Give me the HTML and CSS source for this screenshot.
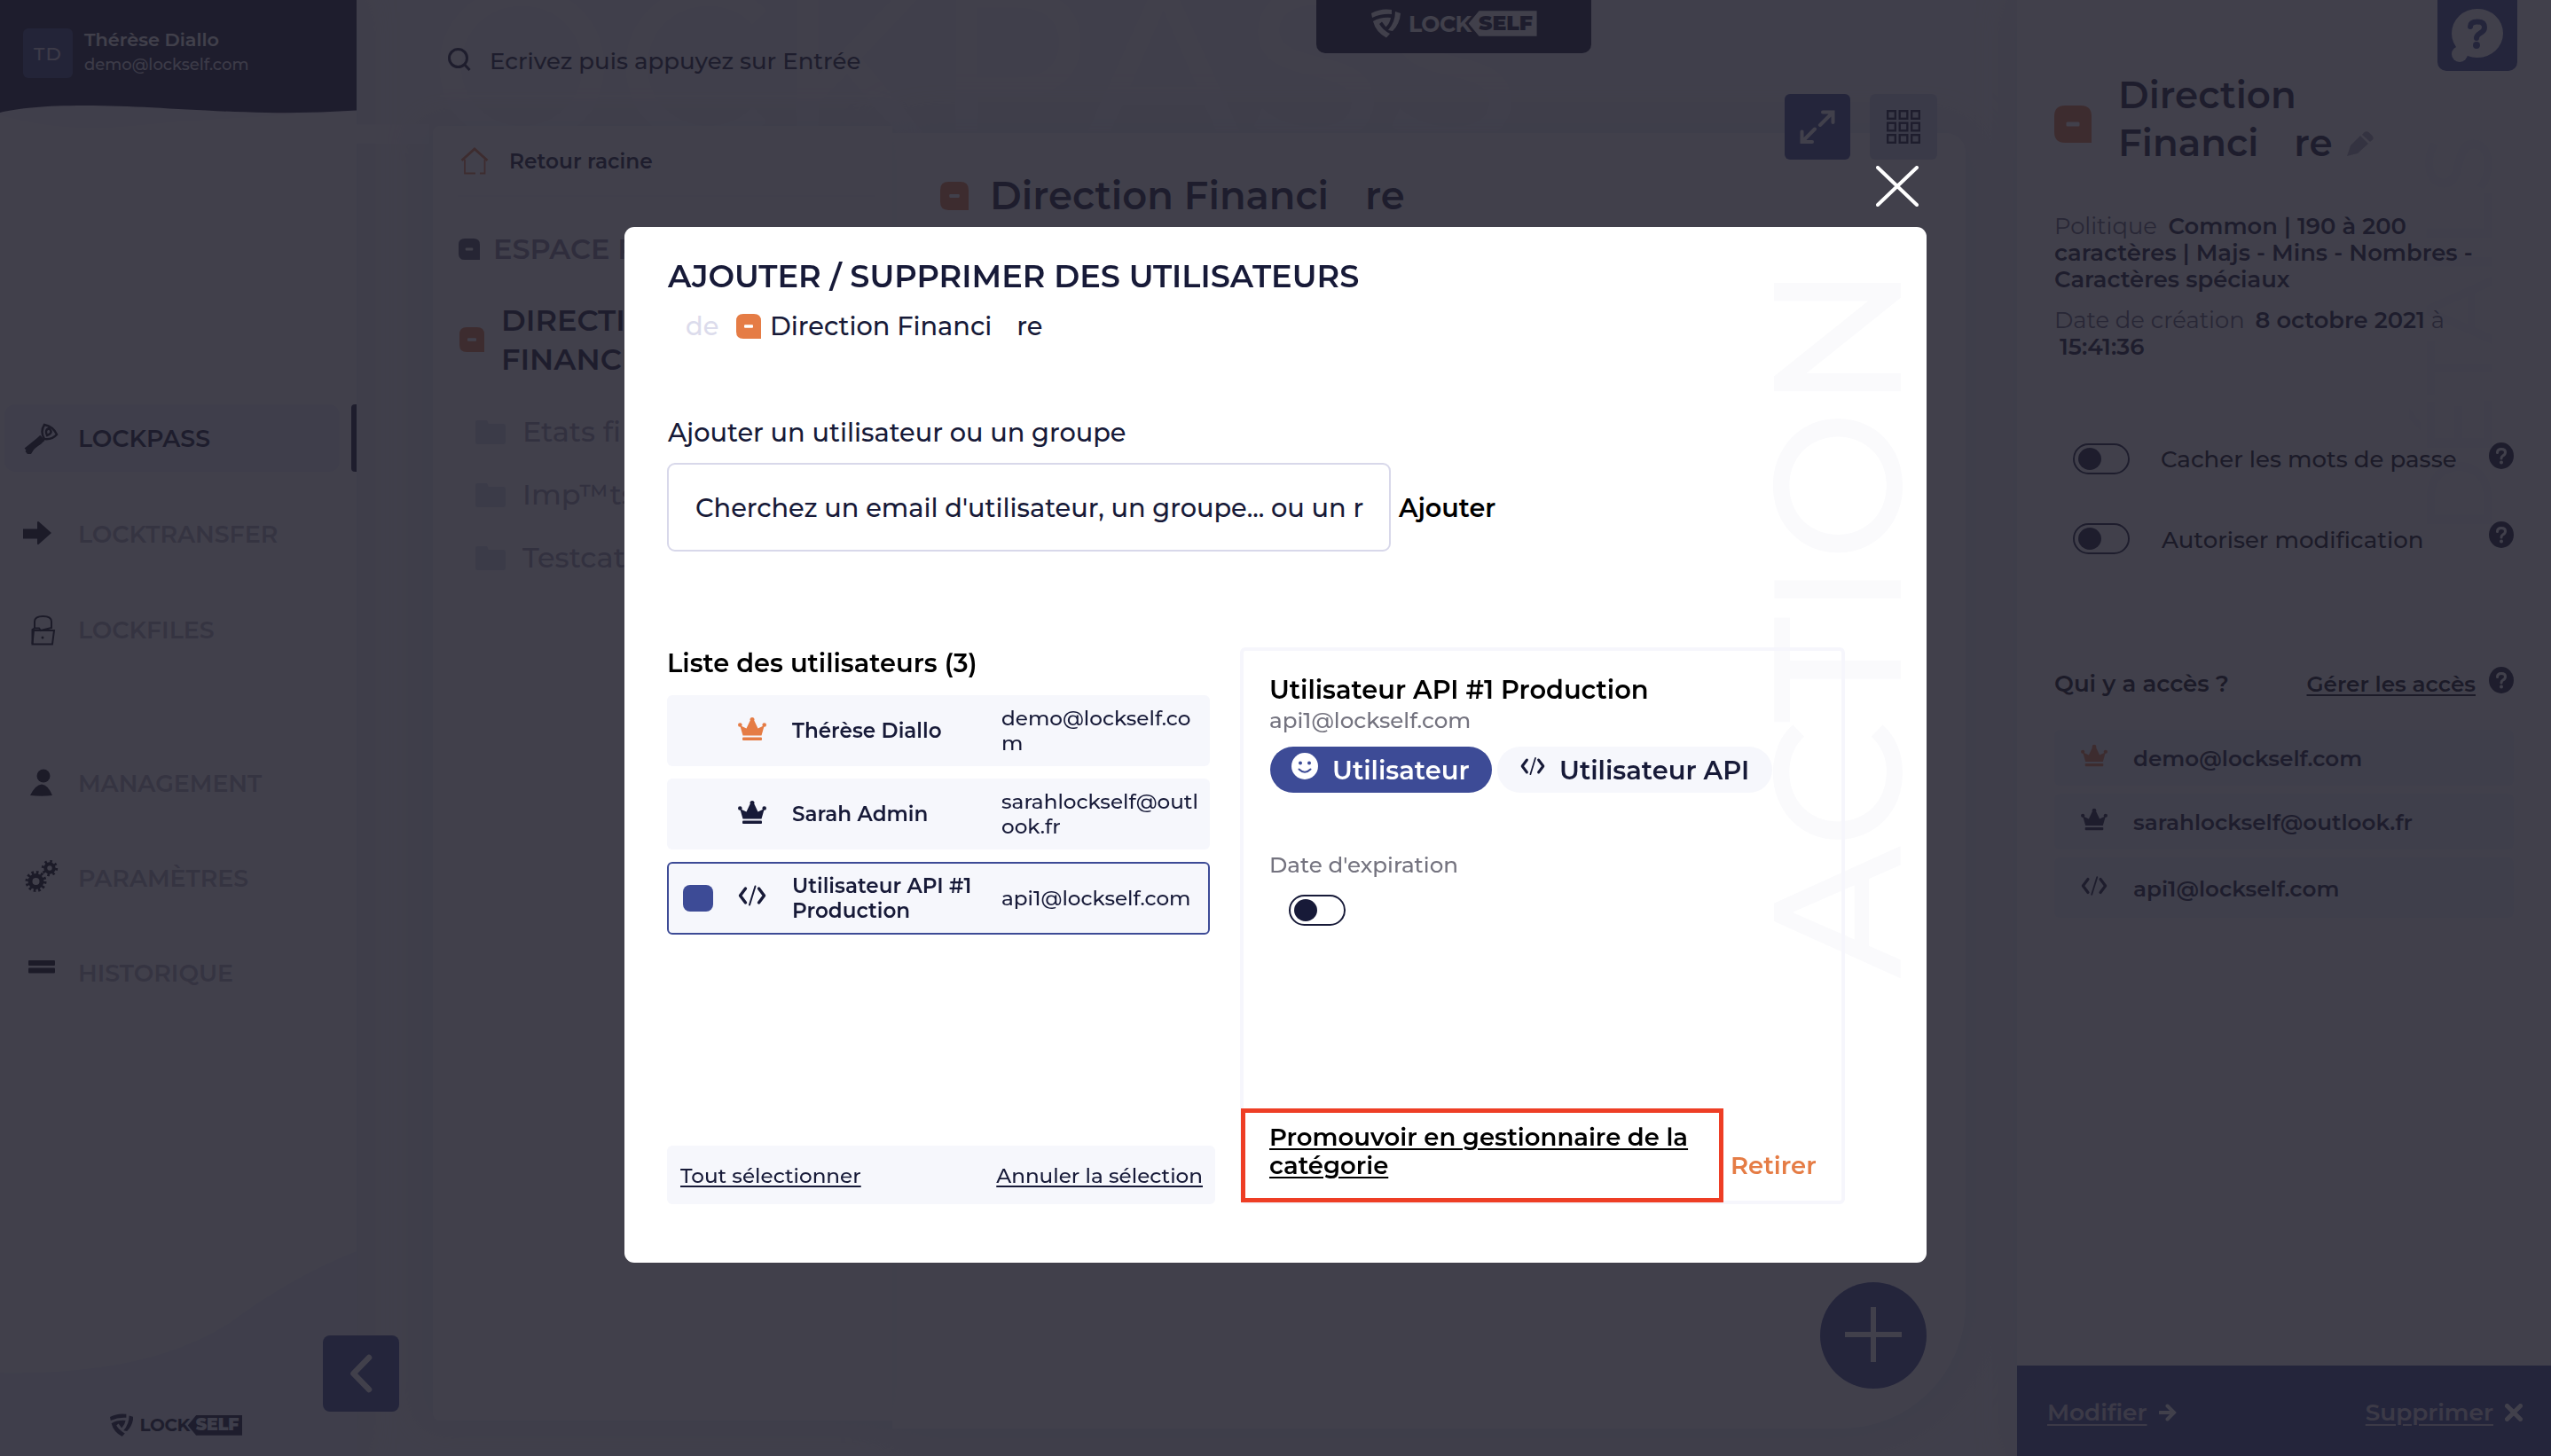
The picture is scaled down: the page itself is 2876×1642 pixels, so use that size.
FILE: index.html
```html
<!DOCTYPE html>
<html lang="fr">
<head>
	<meta charset="UTF-8">
	<meta name="viewport" content="width=device-width, initial-scale=1">
	<title>LockPass</title>
	<link rel="stylesheet" href="styles.css">
</head>
<body>
	<svg class="sprite" xmlns="http://www.w3.org/2000/svg">
		<symbol id="crown" viewBox="0 0 32 26">
			<path d="M5.500 20.500L2.200 9L9.500 12.500L13.500 4H18.500L22.500 12.500L29.800 9L26.500 20.500Z"/>
			<circle cx="2.300" cy="8.500" r="2.300"/><circle cx="16" cy="2.500" r="2.500"/><circle cx="29.700" cy="8.500" r="2.300"/>
			<rect x="5" y="22.500" width="22" height="3.500" rx="1"/>
		</symbol>
		<symbol id="code" viewBox="0 0 32 24">
			<g fill="none" stroke="currentColor" stroke-linecap="round" stroke-linejoin="round">
				<path d="M8.500 4L2.500 12L8.500 20M23.500 4L29.500 12L23.500 20" stroke-width="3.400"/>
				<path d="M19.500 1.500L13 22.500" stroke-width="2"/>
			</g>
		</symbol>
		<symbol id="category" viewBox="0 0 28 28">
			<path d="M8 0H20Q28 0 28 8V28H8Q0 28 0 20V8Q0 0 8 0Z"/>
			<rect x="9" y="12.300" width="10" height="3.400" rx="1" fill="#fff"/>
		</symbol>
		<symbol id="shield" viewBox="0 0 33 33">
			<path d="M0 5Q11 -1 23 1V6Q12 5 1 10Z"/>
			<path d="M27 3L33 5Q32 17 24 25L19 24Q27 15 27 3Z"/>
			<path d="M2 14Q11 9 22 10Q21 16 16.500 20.500L12 14.500L9 17Q13 24 21 28L17 32.500Q5 26 2 14Z"/>
		</symbol>
		<symbol id="folder" viewBox="0 0 34 27">
			<path d="M0 2Q0 0 2 0H13L15 4H32Q34 4 34 6V25Q34 27 32 27H2Q0 27 0 25Z"/>
		</symbol>
		<symbol id="help" viewBox="0 0 28 30">
			<ellipse cx="14" cy="15" rx="14" ry="15"/>
			<path d="M9.500 11.500Q9.500 7.500 14 7.500Q18.500 7.500 18.500 11Q18.500 13.500 16 14.800Q14 16 14 18" fill="none" stroke="#fff" stroke-width="3" stroke-linecap="round"/>
			<circle cx="14" cy="22.500" r="2" fill="#fff"/>
		</symbol>
	</svg>

	<div class="app">
		<aside class="sidebar">
			<svg class="wave-top" viewBox="0 0 402 160">
				<path d="M0 130Q70 150 150 142T402 126V110H0Z" class="wave-soft"/>
				<path d="M0 0H402V124.600Q350 128 300 127C210 125 160 119 95 119C50 119 20 122 0 127Z" class="wave-dark"/>
			</svg>
			<svg class="wave-bottom" viewBox="0 0 402 231">
				<path d="M0 137Q170 140 260 80Q330 28 402 0V231H0Z"/>
			</svg>
			<div class="user">
				<div class="avatar">TD</div>
				<div class="user-info">
					<div class="user-name">Thérèse Diallo</div>
					<div class="user-email">demo@lockself.com</div>
				</div>
			</div>
			<nav class="nav">
				<a class="nav-item active">
					<svg viewBox="0 0 40 40"><path d="M22 20L4 34.500" stroke="currentColor" stroke-width="7.500"/><path d="M2.500 35L5 38H9L14 30L20 27L24 22L19 17Z"/><g fill="none" stroke="currentColor" stroke-width="2.500"><path d="M24 5Q34 7 38 16Q33 22 24 21Q19 13 24 5Z"/><path d="M27 17Q24 11 29 9Q35 14 27 17Z"/></g></svg>
					<span>LOCKPASS</span>
				</a>
				<a class="nav-item">
					<svg viewBox="0 0 40 40"><path d="M0 14.500H16V6.500Q17 5.500 18 6.500L32 19L18 31.500Q17 32.500 16 31.500V25.500H0Z"/></svg>
					<span>LOCKTRANSFER</span>
				</a>
				<a class="nav-item">
					<svg viewBox="0 0 40 40"><g fill="none" stroke="currentColor" stroke-width="2"><path d="M13 18V11Q13 5 22.500 5Q32 5 32 11V19" /><path d="M12 21H35L33 36.500H10.500Z"/><path d="M10.500 36V20L13 18.500H18L20 21L32 18"/></g><circle cx="22" cy="29" r="1.500"/></svg>
					<span>LOCKFILES</span>
				</a>
				<a class="nav-item spaced">
					<svg viewBox="0 0 40 40"><ellipse cx="23" cy="12" rx="7.500" ry="7.500"/><path d="M8 34Q14 22 21 21.500Q28 22 33 34Q21 35.500 8 34Z"/></svg>
					<span>MANAGEMENT</span>
				</a>
				<a class="nav-item">
					<svg viewBox="0 0 40 40"><g fill="none" stroke="currentColor"><circle cx="14.500" cy="24" r="6.500" stroke-width="5"/><circle cx="14.500" cy="24" r="10" stroke-width="4" stroke-dasharray="2.600 2.636"/><circle cx="30" cy="9" r="4.700" stroke-width="4"/><circle cx="30" cy="9" r="7.500" stroke-width="3.400" stroke-dasharray="2.500 3.390"/></g></svg>
					<span>PARAMÈTRES</span>
				</a>
				<a class="nav-item">
					<svg viewBox="0 0 40 40"><rect x="6" y="6" width="30" height="6" rx="1"/><rect x="6" y="14.500" width="30" height="6" rx="1"/></svg>
					<span>HISTORIQUE</span>
				</a>
			</nav>
			<div class="logo logo-side"><svg><use href="#shield"/></svg><span>LOCK</span><b>SELF</b></div>
		</aside>

		<main class="main">
			<div class="watermark watermark-main">LOCKPASS</div>
			<div class="search">
				<svg viewBox="0 0 26 26"><circle cx="11.500" cy="11.500" r="10" /><path d="M18 18L24.500 25"/></svg>
				<span>Ecrivez puis appuyez sur Entrée</span>
			</div>
			<div class="logo-tab">
				<div class="logo"><svg><use href="#shield"/></svg><span>LOCK</span><b>SELF</b></div>
			</div>
			<div class="cards">
				<section class="tree">
					<div class="tree-home">
						<svg viewBox="0 0 32 31"><path d="M1.500 15L16 2L30.500 15" stroke-width="3"/><path d="M5 14V29.500H17M22 29.500H27.500V14" stroke-width="1.800"/></svg>
						<span>Retour racine</span>
					</div>
					<div class="tree-space"><svg><use href="#category"/></svg><span>ESPACE P</span></div>
					<div class="tree-category"><svg><use href="#category"/></svg><span>DIRECTI<br>FINANCI</span></div>
					<ul class="folders">
						<li><svg><use href="#folder"/></svg>Etats fi</li>
						<li><svg><use href="#folder"/></svg>Imp™ts</li>
						<li><svg><use href="#folder"/></svg>Testcat</li>
					</ul>
				</section>
				<section class="content">
					<h1><svg><use href="#category"/></svg>Direction Financi<span>re</span></h1>
				</section>
			</div>
			<div class="view-buttons">
				<button class="btn-expand"><svg viewBox="0 0 40 38"><path d="M23 17L37 3M26 2.500H37.500V14M17 21.500L3 35.500M14 36H2.500V24.500"/></svg></button>
				<button class="btn-grid">
					<svg viewBox="0 0 38 38"><rect x="1.200" y="1.200" width="8.600" height="8.600"/><rect x="14.700" y="1.200" width="8.600" height="8.600"/><rect x="28.200" y="1.200" width="8.600" height="8.600"/><rect x="1.200" y="14.700" width="8.600" height="8.600"/><rect x="14.700" y="14.700" width="8.600" height="8.600"/><rect x="28.200" y="14.700" width="8.600" height="8.600"/><rect x="1.200" y="28.200" width="8.600" height="8.600"/><rect x="14.700" y="28.200" width="8.600" height="8.600"/><rect x="28.200" y="28.200" width="8.600" height="8.600"/></svg>
				</button>
			</div>
			<button class="btn-collapse"><svg viewBox="0 0 26 44"><path d="M22 4L4.500 22L22 40"/></svg></button>
			<button class="btn-add"><svg viewBox="0 0 64 62"><path d="M0 31H64M32 0V62"/></svg></button>
		</main>

		<aside class="details">
			<div class="watermark watermark-details">DÉTAILS</div>
			<div class="help-tab">
				<svg viewBox="0 0 58 60"><ellipse cx="29" cy="27.500" rx="29" ry="27.500"/><circle cx="9" cy="51" r="9"/><path d="M21 20Q21 14.500 29 14.500Q37 14.500 37 21Q37 25 32 27.500Q28 30 28 33" class="mark"/><circle cx="28" cy="41" r="4" class="dot"/></svg>
			</div>
			<div class="details-title">
				<svg class="category-icon"><use href="#category"/></svg>
				<h2>Direction<br>Financi<span>re</span><svg class="pencil" viewBox="0 0 30 28"><path d="M0 28L4 16L15 5L24 14L12 25ZM17 4L19 1.500Q22 -1 25 1.500L28.500 5Q31 8 28.500 10L26 12Z"/></svg></h2>
			</div>
			<p class="policy">Politique <b class="first">Common | 190 à 200</b><br><b>caractères | Majs - Mins - Nombres -<br>Caractères spéciaux</b></p>
			<p class="created">Date de création <b class="first">8 octobre 2021</b> à<br><b class="hour">15:41:36</b></p>
			<div class="option"><span class="toggle"></span><span class="option-label">Cacher les mots de passe</span><svg class="help"><use href="#help"/></svg></div>
			<div class="option option-last"><span class="toggle"></span><span class="option-label modif">Autoriser modification</span><svg class="help"><use href="#help"/></svg></div>
			<div class="access-head"><span>Qui y a accès ?</span><a>Gérer les accès</a><svg class="help"><use href="#help"/></svg></div>
			<ul class="access-list">
				<li><svg class="orange"><use href="#crown"/></svg>demo@lockself.com</li>
				<li><svg><use href="#crown"/></svg>sarahlockself@outlook.fr</li>
				<li class="tall"><svg><use href="#code"/></svg>api1@lockself.com</li>
			</ul>
			<div class="details-footer">
				<a>Modifier</a>
				<svg viewBox="0 0 20 20"><path d="M1 10H16M9.500 2.500L17 10L9.500 17.500" stroke-width="4"/></svg>
				<a class="delete">Supprimer</a>
				<svg viewBox="0 0 20 20"><path d="M2.500 2.500L17.500 17.500M17.500 2.500L2.500 17.500" stroke-width="5"/></svg>
			</div>
		</aside>
	</div>

	<div class="overlay">
		<div class="modal">
			<div class="watermark watermark-modal">ACTION</div>
			<button class="modal-close"><svg viewBox="0 0 48 46"><path d="M2 2L46 44M46 2L2 44"/></svg></button>
			<h2 class="modal-title">AJOUTER / SUPPRIMER DES UTILISATEURS</h2>
			<div class="modal-subtitle"><span class="of">de</span><svg><use href="#category"/></svg>Direction Financi<span class="end">re</span></div>
			<label class="add-label" for="search-user">Ajouter un utilisateur ou un groupe</label>
			<div class="add-row">
				<input type="text" id="search-user" placeholder="Cherchez un email d'utilisateur, un groupe... ou un r">
				<button class="add-btn">Ajouter</button>
			</div>
			<div class="columns">
				<div class="users">
					<h3>Liste des utilisateurs (3)</h3>
					<div class="user-row">
						<span class="check"></span>
						<svg class="orange"><use href="#crown"/></svg>
						<span class="name">Thérèse Diallo</span>
						<span class="email">demo@lockself.com</span>
					</div>
					<div class="user-row">
						<span class="check"></span>
						<svg><use href="#crown"/></svg>
						<span class="name">Sarah Admin</span>
						<span class="email">sarahlockself@outlook.fr</span>
					</div>
					<div class="user-row selected">
						<span class="check"></span>
						<svg><use href="#code"/></svg>
						<span class="name">Utilisateur API #1 Production</span>
						<span class="email">api1@lockself.com</span>
					</div>
					<div class="users-footer">
						<a>Tout sélectionner</a>
						<a>Annuler la sélection</a>
					</div>
				</div>
				<div class="panel">
					<h3>Utilisateur API #1 Production</h3>
					<div class="panel-email">api1@lockself.com</div>
					<div class="pills">
						<span class="pill pill-active"><svg viewBox="0 0 30 30"><circle cx="15" cy="15" r="15"/><circle cx="10" cy="11.500" r="2" class="eye"/><circle cx="20" cy="11.500" r="2" class="eye"/><path d="M8.500 18.500Q15 25 21.500 18.500" class="smile"/></svg>Utilisateur</span>
						<span class="pill pill-api"><svg><use href="#code"/></svg>Utilisateur API</span>
					</div>
					<div class="expiration">Date d'expiration</div>
					<span class="toggle"></span>
					<div class="panel-footer">
						<a class="promote">Promouvoir en gestionnaire de la catégorie</a>
						<a class="remove">Retirer</a>
					</div>
					<div class="highlight"></div>
				</div>
			</div>
		</div>
	</div>
</body>
</html>
```
FILE: styles.css
```css
* {
	box-sizing: border-box;
}

body {
	margin: 0;
	font-family: Montserrat, Inter, sans-serif;
	color: #171a38;
	overflow: hidden;
}

h1, h2, h3, p, ul {
	margin: 0;
	padding: 0;
	list-style: none;
	font-weight: 600;
}

button {
	border: none;
	padding: 0;
	background: none;
	font-family: inherit;
	display: flex;
	align-items: center;
	justify-content: center;
}

svg {
	fill: currentColor;
	flex: none;
}

a {
	color: inherit;
}

.sprite {
	position: absolute;
	width: 0;
	height: 0;
}

.orange {
	color: #e57c45;
}

.app {
	display: grid;
	grid-template-columns: 402px 1fr 602px;
	height: 1642px;
	background: #f6f5fa;
}

.watermark {
	position: absolute;
	font-weight: 500;
	line-height: 1;
	white-space: nowrap;
}

/* sidebar */
.sidebar {
	position: relative;
	z-index: 1;
	display: flex;
	flex-direction: column;
	background: #fff;
	box-shadow: 0 0 40px rgba(190, 205, 235, 0.35);
}

.wave-top {
	position: absolute;
	top: 0;
	left: 0;
	width: 402px;
	height: 160px;
}

.wave-dark {
	fill: #171a38;
}

.wave-soft {
	fill: #f8f4fa;
}

.wave-bottom {
	position: absolute;
	bottom: 0;
	left: 0;
	width: 402px;
	height: 231px;
	fill: #edf2fb;
}

.user {
	position: relative;
	display: flex;
	gap: 13px;
	padding: 32px 0 0 26px;
	height: 456px;
	color: #fff;
}

.avatar {
	width: 56px;
	height: 56px;
	border-radius: 6px;
	background: #36427f;
	color: #e4dfea;
	font-size: 21px;
	font-weight: 500;
	line-height: 57px;
	letter-spacing: 0.06em;
	text-align: center;
}

.user-info {
	margin-top: -1px;
	line-height: 28px;
}

.user-name {
	font-size: 20.8px;
	font-weight: 600;
	color: #fff;
}

.user-email {
	font-size: 18px;
	font-weight: 500;
	color: #dedae6;
}

.nav {
	display: flex;
	flex-direction: column;
	gap: 32px;
}

.nav-item {
	position: relative;
	display: flex;
	align-items: center;
	gap: 22px;
	width: 378px;
	height: 76px;
	margin-left: 5px;
	padding-left: 21px;
	border-radius: 12px;
	font-size: 26.8px;
	font-weight: 600;
	color: #b0abbe;
}

.nav-item svg {
	width: 40px;
	height: 40px;
	color: #07081a;
}

.nav-item.active {
	background: #eef2fb;
	color: #171a38;
}

.nav-item.active::after {
	content: '';
	position: absolute;
	left: 391px;
	top: 0;
	width: 6px;
	height: 76px;
	border-radius: 4px 0 0 4px;
	background: #171a38;
}

.nav-item.spaced {
	margin-top: 65px;
}

.nav-item.spaced ~ .nav-item {
	margin-top: -1px;
}

.logo {
	position: relative;
	display: flex;
	align-items: center;
	height: 1.16em;
	font-size: 25px;
	font-weight: 700;
	color: #fff;
}

.logo svg {
	width: 1.32em;
	height: 1.32em;
	margin-right: 0.36em;
}

.logo span {
	letter-spacing: -0.02em;
}

.logo b {
	margin-left: -0.12em;
	padding: 0 0.2em 0 0.48em;
	font-size: 0.94em;
	line-height: 1.21em;
	background: #fff;
	color: #171a38;
	clip-path: polygon(0.5em 0, 100% 0, 100% 100%, 0.5em 100%, 0 50%);
}

.logo-side {
	margin: auto 0 23px 124px;
	font-size: 20px;
	color: #171a38;
}

.logo-side b {
	background: #171a38;
	color: #e9f0fa;
}

/* main */
.main {
	position: relative;
	z-index: 2;
	padding-left: 86px;
	padding-right: 58px;
}

.watermark-main {
	left: -64px;
	top: -52px;
	font-size: 250px;
	color: #fbfafd;
	clip-path: inset(0 0 0 64px);
}

.search {
	position: relative;
	display: flex;
	align-items: center;
	gap: 21px;
	height: 142px;
	padding: 0 0 5px 17px;
	font-size: 26px;
	font-weight: 500;
}

.search svg {
	width: 26px;
	height: 26px;
	margin-top: -3px;
	fill: none;
	stroke: #171a38;
	stroke-width: 3;
}

.search::after {
	content: '';
	position: absolute;
	left: 8px;
	top: 107px;
	width: 500px;
	height: 2px;
	background: #fff;
}

.logo-tab {
	position: absolute;
	left: 1082px;
	top: 0;
	display: flex;
	width: 310px;
	height: 60px;
	padding: 12px 0 0 62px;
	border-radius: 0 0 10px 10px;
	background: #171a38;
}

.cards {
	position: relative;
	display: flex;
	align-items: flex-start;
}

.tree, .content {
	background: #fff;
	box-shadow: 0 0 60px rgba(180, 205, 235, 0.4);
}

.tree {
	position: relative;
	z-index: 1;
	width: 518px;
	height: 1460px;
	padding: 16px 0 0 28px;
	border-radius: 8px 0 0 8px;
	box-shadow: -10px 0 40px rgba(180, 205, 235, 0.3);
}

.content {
	width: 1210px;
	height: 1461px;
	margin-top: 8px;
	padding: 46px 0 0 54px;
	border-radius: 0 22px 140px 0;
}

.content h1 {
	display: flex;
	align-items: center;
	font-size: 43.3px;
	line-height: 50px;
}

.content h1 svg {
	width: 32px;
	height: 32px;
	margin-right: 24px;
	color: #e57c45;
}

.content h1 span {
	margin-left: 41px;
}

.tree-home {
	display: flex;
	align-items: center;
	gap: 23px;
	height: 64px;
	padding: 0 0 16px 3px;
	margin-right: 20px;
	border-bottom: 2px solid #f7f6fb;
	font-size: 23.3px;
	font-weight: 600;
}

.tree-home svg {
	width: 32px;
	height: 31px;
	fill: none;
	stroke: #e57c45;
}

.tree-space {
	display: flex;
	align-items: center;
	gap: 14px;
	margin-top: 37px;
	font-size: 32px;
	font-weight: 600;
	line-height: 44px;
	color: #88829d;
}

.tree-space svg {
	width: 26px;
	height: 24px;
	color: #4a4b66;
}

.tree-category {
	display: flex;
	align-items: center;
	gap: 19px;
	margin-top: 36px;
	padding-left: 2px;
	font-size: 33.6px;
	font-weight: 600;
	line-height: 44px;
}

.tree-category svg {
	width: 28px;
	height: 28px;
	color: #e57c45;
}

.folders {
	display: flex;
	flex-direction: column;
	gap: 27px;
	margin-top: 38px;
	padding-left: 20px;
}

.folders li {
	display: flex;
	align-items: center;
	gap: 19px;
	font-size: 32px;
	font-weight: 500;
	line-height: 44px;
	color: #9c97ae;
}

.folders svg {
	width: 34px;
	height: 27px;
	color: #d6dcec;
}

.view-buttons {
	position: absolute;
	left: 1610px;
	top: 106px;
	display: flex;
	gap: 22px;
}

.btn-expand, .btn-grid {
	width: 74px;
	height: 74px;
	border-radius: 6px;
	background: #3d4b96;
}

.btn-expand svg {
	width: 40px;
	height: 38px;
	fill: none;
	stroke: #fff;
	stroke-width: 4;
	stroke-linecap: round;
}

.btn-grid {
	width: 76px;
	background: #d0d8ea;
}

.btn-grid svg {
	width: 38px;
	height: 38px;
	fill: none;
	stroke: #171a38;
	stroke-width: 2.4;
}

.btn-collapse {
	position: absolute;
	left: -38px;
	top: 1506px;
	width: 86px;
	height: 86px;
	border-radius: 8px;
	background: #3d4b96;
}

.btn-collapse svg {
	width: 26px;
	height: 44px;
	margin-left: -1px;
	fill: none;
	stroke: #fff;
	stroke-width: 6.5;
	stroke-linecap: round;
	stroke-linejoin: round;
}

.btn-add {
	position: absolute;
	left: 1650px;
	top: 1446px;
	width: 120px;
	height: 120px;
	border-radius: 50%;
	background: #3d4b96;
}

.btn-add svg {
	width: 64px;
	height: 62px;
	margin-top: -2px;
	stroke: #fff;
	stroke-width: 6;
}

/* details */
.details {
	position: relative;
	z-index: 3;
	display: flex;
	flex-direction: column;
	padding: 80px 42px 0;
	background: #fff;
	box-shadow: 0 0 40px rgba(190, 205, 235, 0.35);
}

.watermark-details {
	left: 446px;
	top: 602px;
	font-size: 104.5px;
	color: #f5f8fd;
	transform: rotate(-90deg);
	transform-origin: 0 0;
}

.help-tab {
	position: absolute;
	right: 38px;
	top: 0;
	width: 90px;
	height: 80px;
	padding: 10px 16px;
	border-radius: 0 0 10px 10px;
	background: #3d4b96;
}

.help-tab svg {
	width: 58px;
	height: 60px;
	fill: #fff;
}

.help-tab .mark {
	fill: none;
	stroke: #3d4b96;
	stroke-width: 6;
	stroke-linecap: round;
}

.help-tab .dot {
	fill: #3d4b96;
}

.details-title {
	position: relative;
	display: flex;
	align-items: flex-start;
}

.details-title .category-icon {
	width: 44px;
	height: 42px;
	margin: 39px 28px 0 -1px;
	color: #e57c45;
}

.details-title h2 {
	padding-left: 1px;
	font-size: 42px;
	line-height: 54px;
}

.details-title h2 span {
	margin: 0 16px 0 40px;
}

.pencil {
	width: 30px;
	height: 28px;
	color: #aaa6b8;
}

.policy, .created {
	position: relative;
	margin-top: 52px;
	font-size: 25.8px;
	font-weight: 400;
	line-height: 30px;
	color: #5b5871;
	white-space: nowrap;
}

.policy b, .created b {
	font-weight: 600;
	color: #171a38;
}

.policy .first {
	margin-left: 6px;
}

.created .first {
	margin-left: 5px;
}

.created {
	margin-top: 16px;
	margin-bottom: 94px;
}

.created .hour {
	margin-left: 6px;
}

.option {
	position: relative;
	display: flex;
	align-items: center;
	height: 35px;
	margin-bottom: 54.5px;
	padding-left: 21px;
	color: #07071a;
}

.option-last {
	margin-bottom: 128px;
}

.toggle {
	display: block;
	width: 64px;
	height: 35px;
	padding: 3px 4px;
	border: 2.5px solid #171a38;
	border-radius: 18px;
}

.toggle::before {
	content: '';
	display: block;
	width: 26px;
	height: 25px;
	border-radius: 50%;
	background: #171a38;
}

.option-label {
	margin-left: 35px;
	font-size: 26px;
	font-weight: 500;
}

.option-label.modif {
	padding-top: 3px;
	margin-left: 36px;
}

.help {
	width: 28px;
	height: 30px;
	margin: -8px 0 0 auto;
	color: #171a38;
}

.access-head {
	position: relative;
	display: flex;
	align-items: center;
	height: 36px;
	font-size: 26px;
	font-weight: 600;
	color: #07071a;
}

.access-head a {
	margin-left: auto;
	font-size: 24.7px;
	text-decoration: underline;
	text-decoration-thickness: 2px;
	text-underline-offset: 3px;
}

.access-head .help {
	margin-left: 15px;
}

.access-list {
	display: flex;
	flex-direction: column;
	gap: 9px;
	margin-top: 34px;
}

.access-list li {
	display: flex;
	align-items: center;
	gap: 29px;
	height: 63px;
	padding: 2px 0 0 30px;
	border-radius: 6px;
	background: #f2f4fb;
	font-size: 24.7px;
}

.access-list li.tall {
	height: 68px;
}

.access-list svg {
	width: 30px;
	height: 26px;
	margin-top: -6px;
}

.details-footer {
	display: flex;
	align-items: center;
	height: 102px;
	margin: auto -42px 0;
	padding: 3px 32px 0 34px;
	background: #3d4b96;
	color: #ddd8e4;
	font-size: 26.3px;
	font-weight: 600;
}

.details-footer a {
	text-decoration: underline;
	text-decoration-thickness: 2px;
	text-underline-offset: 4px;
}

.details-footer .delete {
	margin-left: auto;
}

.details-footer svg {
	width: 20px;
	height: 20px;
	margin-left: 13px;
	fill: none;
	stroke: #fff;
	stroke-linecap: round;
}

/* modal */
.overlay {
	position: fixed;
	z-index: 10;
	top: 0;
	left: 0;
	width: 100%;
	height: 1642px;
	display: flex;
	justify-content: center;
	align-items: flex-start;
	padding-top: 256px;
	background: rgba(32, 31, 44, 0.85);
}

.modal {
	position: relative;
	width: 1468px;
	height: 1168px;
	padding: 34px 92px 0 48px;
	border-radius: 11px;
	background: #fff;
}

.watermark-modal {
	left: 1265px;
	top: 847px;
	font-size: 203px;
	color: #fafafc;
	transform: rotate(-90deg);
	transform-origin: 0 0;
}

.modal-close {
	position: absolute;
	right: 9px;
	top: -69px;
}

.modal-close svg {
	width: 48px;
	height: 46px;
	stroke: #fff;
	stroke-width: 4;
	stroke-linecap: round;
}

.modal-title {
	position: relative;
	padding-left: 1px;
	font-size: 35.2px;
	line-height: 44px;
}

.modal-subtitle {
	display: flex;
	align-items: center;
	margin-top: 16px;
	padding-left: 21px;
	font-size: 28.8px;
	font-weight: 500;
	line-height: 36px;
}

.modal-subtitle svg {
	width: 28px;
	height: 28px;
	margin: 0 10px 0 17px;
	color: #e57c45;
}

.modal-subtitle .of {
	width: 40px;
	color: #dcdcec;
}

.modal-subtitle .end {
	margin-left: 28px;
}

.add-label {
	display: block;
	margin-top: 84px;
	padding-left: 1px;
	font-size: 28.8px;
	font-weight: 500;
	line-height: 36px;
}

.add-row {
	display: flex;
	align-items: center;
	gap: 9px;
	margin-top: 16px;
}

.add-row input {
	width: 816px;
	height: 100px;
	padding: 0 28px 0 30px;
	border: 2px solid #d8d8ea;
	border-radius: 9px;
	background: #fff;
	font-family: inherit;
	font-size: 28.8px;
	font-weight: 500;
	color: #171a38;
}

.add-row input::placeholder {
	color: #171a38;
	opacity: 1;
}

.add-btn {
	font-size: 28.6px;
	font-weight: 600;
	color: #000;
}

.columns {
	position: relative;
	display: flex;
	justify-content: space-between;
	margin-top: 108px;
	height: 628px;
}

.users {
	display: flex;
	flex-direction: column;
	width: 618px;
}

.users h3 {
	margin-bottom: 18px;
	font-size: 28.9px;
	line-height: 36px;
	color: #000;
}

.user-row {
	display: grid;
	grid-template-columns: 62px 61px 236px 1fr;
	align-items: center;
	width: 612px;
	height: 80px;
	margin-bottom: 14px;
	padding: 0 7px 0 18px;
	border-radius: 6px;
	background: #f6f7fc;
	font-size: 23.1px;
	line-height: 28px;
}

.user-row svg {
	width: 32px;
	height: 26px;
	margin-top: -5px;
}

.user-row .name {
	padding-right: 20px;
	font-weight: 600;
}

.user-row .email {
	font-weight: 500;
	word-break: break-all;
}

.user-row.selected {
	height: 82px;
	padding: 0 5px 1px 16px;
	border: 2px solid #3d4b96;
}

.selected .check {
	width: 34px;
	height: 30px;
	border-radius: 8px;
	background: #3d4b96;
}

.users-footer {
	display: flex;
	align-items: center;
	justify-content: space-between;
	height: 66px;
	margin-top: auto;
	padding: 2px 14px 0 15px;
	border-radius: 6px;
	background: #f6f7fc;
	font-size: 23.1px;
	font-weight: 500;
}

.users-footer a {
	text-decoration: underline;
	text-decoration-thickness: 2px;
	text-underline-offset: 3px;
}

.panel {
	position: relative;
	display: flex;
	flex-direction: column;
	width: 682px;
	padding: 28px 28px 24px 29px;
	border: 4px solid #f6f6fc;
	border-radius: 6px;
}

.panel h3 {
	font-size: 28.9px;
	line-height: 32px;
	color: #000;
}

.panel-email, .expiration {
	margin-top: 3px;
	font-size: 24.6px;
	font-weight: 500;
	line-height: 30px;
	color: #74737f;
}

.pills {
	display: flex;
	gap: 6px;
	margin-top: 15px;
	margin-left: 1px;
}

.pill {
	display: flex;
	align-items: center;
	width: 250px;
	height: 52px;
	padding-left: 24px;
	border-radius: 26px;
	font-size: 29px;
	font-weight: 600;
}

.pill svg {
	width: 30px;
	height: 30px;
	margin: -8px 16px 0 0;
}

.pill-active {
	background: #3d4b96;
	color: #fff;
}

.pill-active .eye {
	fill: #3d4b96;
}

.pill-active .smile {
	fill: none;
	stroke: #3d4b96;
	stroke-width: 2;
	stroke-linecap: round;
}

.pill-api {
	width: 310px;
	padding-left: 26px;
	background: #f6f7fc;
}

.pill-api svg {
	width: 28px;
	height: 22px;
}

.expiration {
	margin-top: 66px;
}

.panel .toggle {
	margin: 19px 0 0 22px;
}

.panel-footer {
	display: flex;
	align-items: flex-end;
	margin-top: auto;
	font-size: 27.5px;
	font-weight: 600;
	line-height: 32px;
}

.promote {
	width: 520px;
	padding-right: 40px;
	color: #000;
	text-decoration: underline;
	text-decoration-thickness: 2px;
	text-underline-offset: 3px;
}

.remove {
	color: #e57c45;
}

.highlight {
	position: absolute;
	left: -3px;
	bottom: -2px;
	width: 544px;
	height: 106px;
	border: 5px solid #ee3e25;
}
```
